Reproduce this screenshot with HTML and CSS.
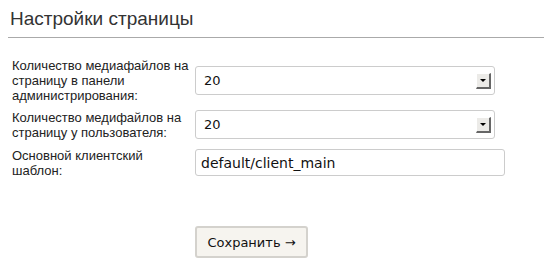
FILE: index.html
```html
<!DOCTYPE html>
<html lang="ru">
<head>
    <meta charset="UTF-8">
    <title>Настройки страницы</title>
    <link rel="stylesheet" href="styles.css">
</head>
<body>
    <div id="page">
        <h2 class="title">Настройки страницы</h2>
        <form class="settings">
            <div class="rows">
                <label class="name" for="perAdmin">Количество медиафайлов на страницу в панели администрирования:</label>
                <div class="selectBox">
                    <select id="perAdmin" class="field">
                        <option>20</option>
                        <option>50</option>
                        <option>100</option>
                    </select>
                    <span class="arrow"></span>
                </div>

                <label class="name" for="perUser">Количество медифайлов на страницу у пользователя:</label>
                <div class="selectBox">
                    <select id="perUser" class="field">
                        <option>20</option>
                        <option>50</option>
                        <option>100</option>
                    </select>
                    <span class="arrow"></span>
                </div>

                <label class="name" for="tpl">Основной клиентский шаблон:</label>
                <input type="text" id="tpl" class="field text" value="default/client_main">
            </div>
            <div class="actions">
                <button type="button" class="save">Сохранить →</button>
            </div>
        </form>
    </div>
</body>
</html>
```

FILE: styles.css
```css
body {
    margin: 8px 0 0 8px;
    background: #fff;
    font-family: "Liberation Sans", Arial, sans-serif;
    color: #222;
}
.title {
    margin: 0;
    padding: 0 0 7px 2px;
    font-size: 19px;
    font-weight: normal;
    color: #333;
    border-bottom: 1px solid #aaa;
}
.settings {
    padding: 20px 0 0 4px;
}
.rows {
    display: grid;
    grid-template-columns: 183px auto;
    grid-template-rows: 44px 31px 31px;
    align-items: center;
    row-gap: 7px;
}
.name {
    font-size: 13px;
    line-height: 15px;
    color: #222;
}
.selectBox {
    position: relative;
    width: 300px;
}
.field {
    box-sizing: border-box;
    font-family: "DejaVu Sans", Verdana, sans-serif;
    font-size: 13px;
    color: #111;
    background: #fff;
    border: 1px solid #ccc;
    border-radius: 3px;
    outline: none;
}
select.field {
    -webkit-appearance: none;
    appearance: none;
    display: block;
    width: 300px;
    height: 29px;
    padding: 0 0 0 8px;
}
.arrow {
    position: absolute;
    top: 7px;
    right: 4px;
    width: 15px;
    height: 16px;
    box-sizing: border-box;
    background: #ecebe8;
    border-top: 1px solid #fff;
    border-left: 1px solid #fff;
    border-right: 2px solid #666;
    border-bottom: 2px solid #666;
    pointer-events: none;
}
.arrow::after {
    content: "";
    position: absolute;
    left: 3px;
    top: 5px;
    border-left: 3px solid transparent;
    border-right: 3px solid transparent;
    border-top: 3px solid #000;
}
.text {
    width: 310px;
    height: 27px;
    padding: 0 0 0 5px;
    font-size: 14px;
}
.actions {
    padding: 48px 0 0 183px;
}
.save {
    width: 113px;
    height: 32px;
    font-family: "DejaVu Sans", Verdana, sans-serif;
    font-size: 13px;
    color: #111;
    background: #f6f4ef;
    border: 2px solid #d4d2cd;
    border-radius: 3px;
    cursor: pointer;
}
```
